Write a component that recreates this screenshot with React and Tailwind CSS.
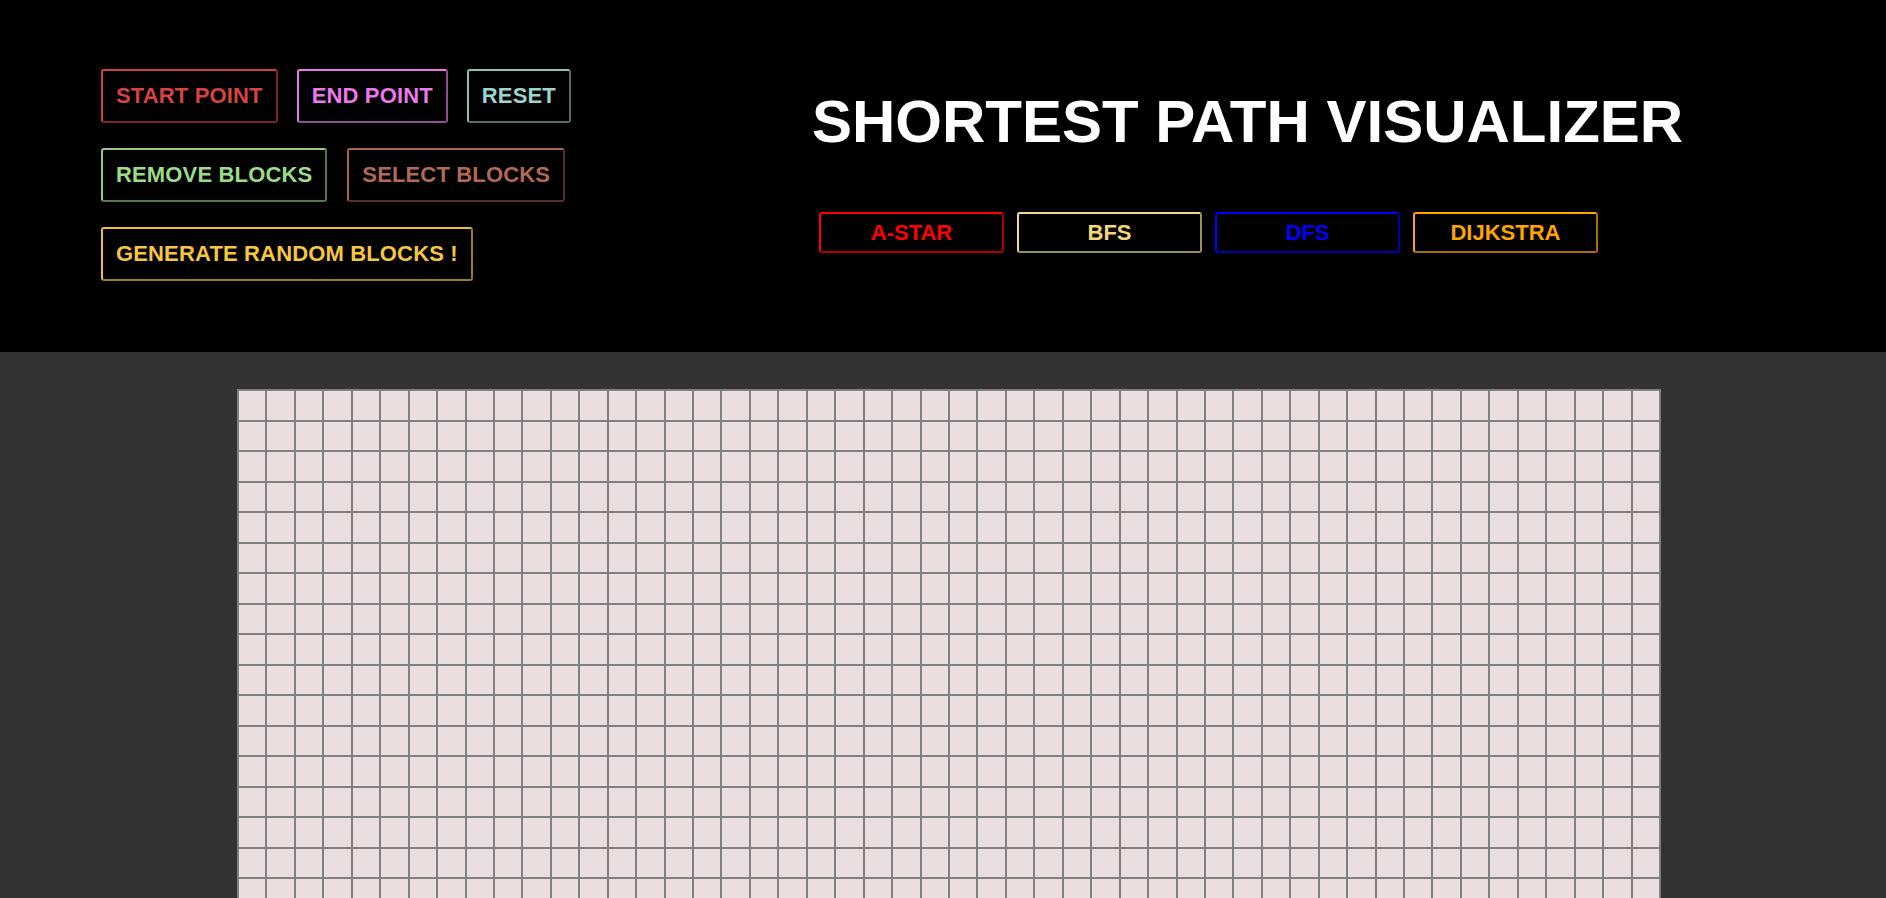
import React from "react";

const font = { fontFamily: '"Liberation Sans", Arial, sans-serif' };

function CtrlButton({ label, cls }) {
  return (
    <button
      className={`h-[54px] px-[13px] bg-black rounded-[3px] border-2 [border-style:outset] text-[22px] tracking-[0.15px] font-bold leading-none whitespace-nowrap ${cls}`}
    >
      {label}
    </button>
  );
}

function AlgoButton({ label, cls }) {
  return (
    <button
      className={`w-[185px] h-[41px] bg-black rounded-[3px] border-2 [border-style:outset] text-[22px] font-bold leading-none whitespace-nowrap ${cls}`}
    >
      {label}
    </button>
  );
}

export default function App() {
  const rows = 20;
  const cols = 50;
  const cells = [];
  for (let i = 0; i < rows * cols; i++) {
    cells.push(<div key={i} className="bg-[#ebdede]" />);
  }
  return (
    <div className="h-screen overflow-hidden flex flex-col bg-[#333331]" style={font}>
      <header className="h-[352px] shrink-0 bg-black flex pl-[101px] pt-[69px]">
        <div className="w-[711px] shrink-0 flex flex-col gap-[25px]">
          <div className="flex gap-[19px]">
            <CtrlButton label="START POINT" cls="text-[#d64343] border-[#d04242]" />
            <CtrlButton label="END POINT" cls="text-[#ec78ec] border-[#e878e8]" />
            <CtrlButton label="RESET" cls="text-[#9ad6ce] border-[#8cc4bc]" />
          </div>
          <div className="flex gap-[20px]">
            <CtrlButton label="REMOVE BLOCKS" cls="text-[#9bdc8b] border-[#92cc84]" />
            <CtrlButton label="SELECT BLOCKS" cls="text-[#b06a55] border-[#a86450]" />
          </div>
          <div className="flex gap-[20px]">
            <CtrlButton label="GENERATE RANDOM BLOCKS !" cls="text-[#f7c640] border-[#eec040]" />
          </div>
        </div>
        <div className="flex flex-col">
          <h1 className="mt-[23px] text-[60px] leading-[60px] font-bold text-white whitespace-nowrap">
            SHORTEST PATH VISUALIZER
          </h1>
          <div className="mt-[60px] ml-[7px] flex gap-[13px]">
            <AlgoButton label="A-STAR" cls="text-[#ff0000] border-[#ff0000]" />
            <AlgoButton label="BFS" cls="text-[#f2d67a] border-[#f0da82]" />
            <AlgoButton label="DFS" cls="text-[#0000ff] border-[#0000ff]" />
            <AlgoButton label="DIJKSTRA" cls="text-[#ffa500] border-[#ffa500]" />
          </div>
        </div>
      </header>
      <main className="flex-1 overflow-hidden pt-[37px] pl-[237px]">
        <div className="w-[1424px] grid grid-cols-[repeat(50,minmax(0,1fr))] auto-rows-[28.5px] gap-[2px] p-[2px] bg-[#808080]">
          {cells}
        </div>
      </main>
    </div>
  );
}
